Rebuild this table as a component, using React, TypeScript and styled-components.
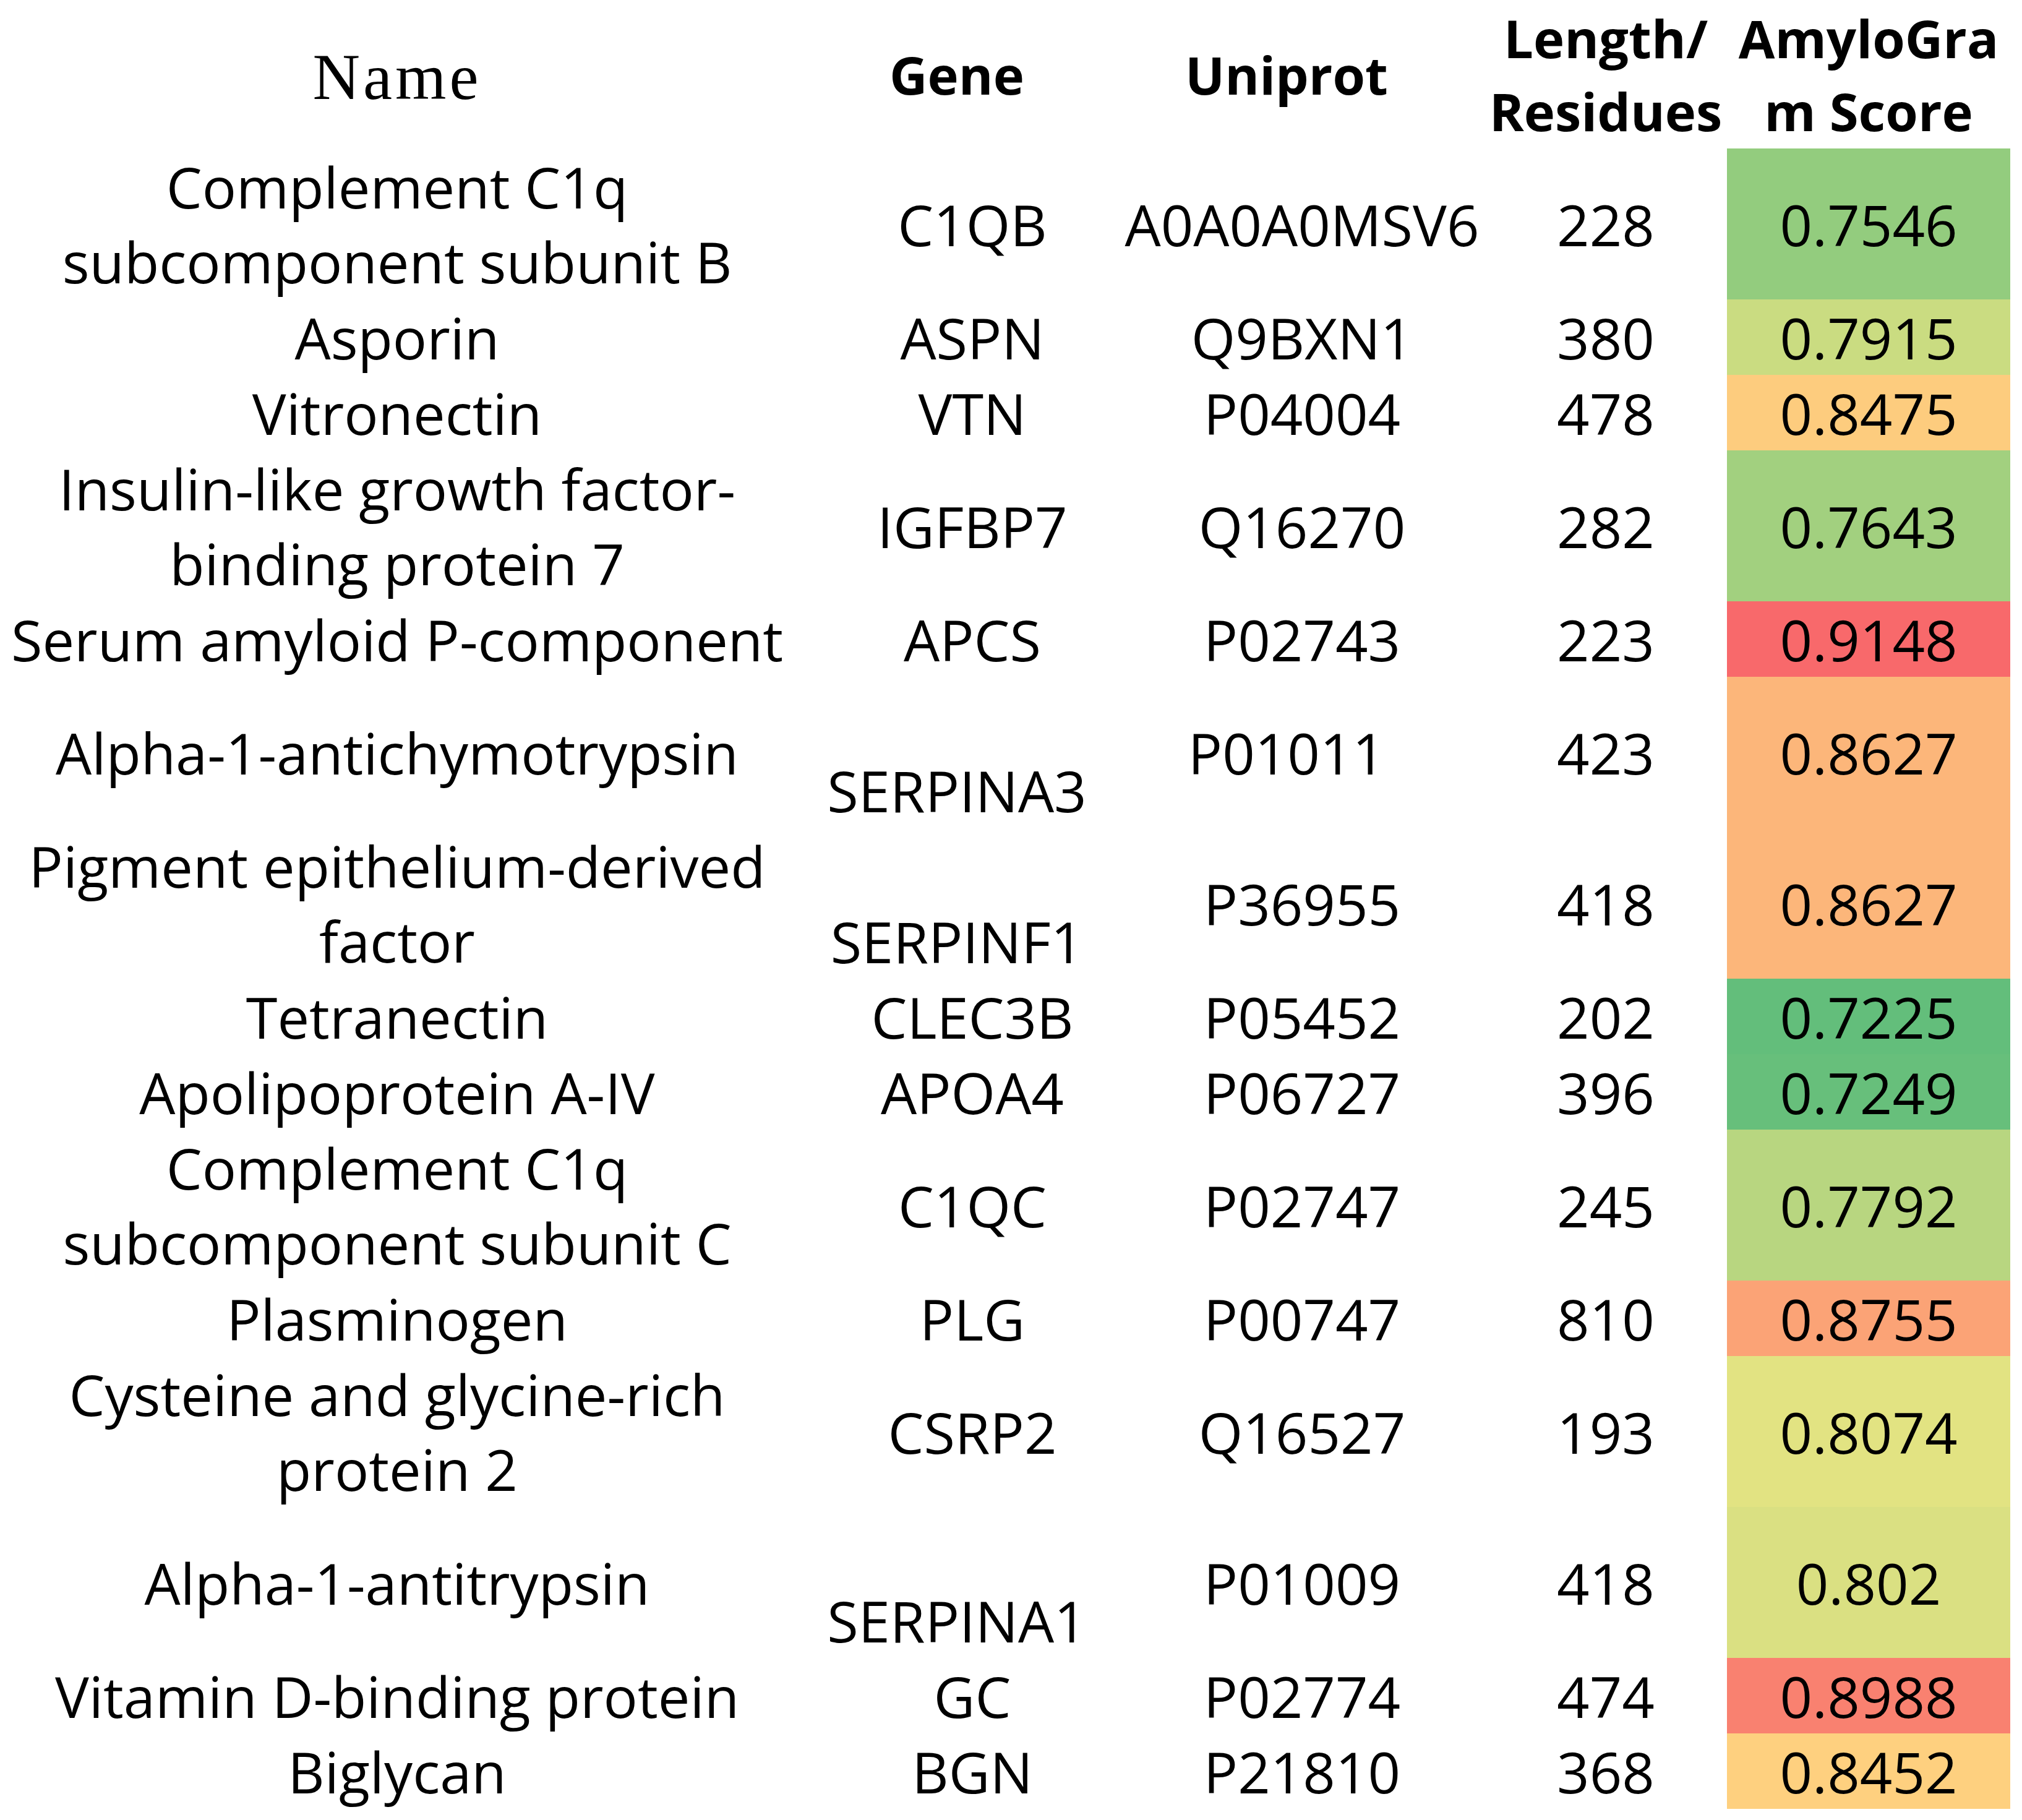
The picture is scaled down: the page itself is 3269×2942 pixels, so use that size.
import React from 'react';
import styled, { createGlobalStyle } from 'styled-components';

const GlobalStyle = createGlobalStyle`
  html, body {
    margin: 0;
    padding: 0;
    background: #fff;
  }
`;

const UNIT = 122;
const COLUMNS = '1284px 526px 590px 392px 458px';

const Sheet = styled.div`
  width: 3250px;
  color: #000;
  font-family: 'Open Sans', 'Noto Sans', sans-serif;
`;

const Row = styled.div<{ $height: number }>`
  display: grid;
  grid-template-columns: ${COLUMNS};
  height: ${(p) => p.$height}px;
`;

const Cell = styled.div<{ $valign?: 'center' | 'bottom'; $nudge?: number }>`
  display: flex;
  flex-direction: column;
  align-items: center;
  justify-content: ${(p) => (p.$valign === 'bottom' ? 'flex-end' : 'center')};
  padding-left: ${(p) => Math.max(0, (p.$nudge || 0) * 2)}px;
  padding-right: ${(p) => Math.max(0, -(p.$nudge || 0) * 2)}px;
  font-size: 92px;
  line-height: 121px;
  white-space: nowrap;
  text-align: center;
`;

const HeadCell = styled(Cell)`
  font-weight: 700;
  font-size: 85px;
  line-height: 118px;
`;

const SerifHead = styled(Cell)`
  font-family: 'Liberation Serif', 'Times New Roman', serif;
  font-size: 106px;
  letter-spacing: 5px;
  padding-top: 8px;
`;

const ScoreCell = styled(Cell)<{ $bg: string }>`
  background: ${(p) => p.$bg};
`;

type Protein = {
  name: string[];
  gene: string;
  uniprot: string;
  length: number;
  score: string;
  span: 1 | 2;
  geneBottom?: boolean;
  uniShift?: boolean;
};

const proteins: Protein[] = [
  { name: ['Complement C1q', 'subcomponent subunit B'], gene: 'C1QB', uniprot: 'A0A0A0MSV6', length: 228, score: '0.7546', span: 2 },
  { name: ['Asporin'], gene: 'ASPN', uniprot: 'Q9BXN1', length: 380, score: '0.7915', span: 1 },
  { name: ['Vitronectin'], gene: 'VTN', uniprot: 'P04004', length: 478, score: '0.8475', span: 1 },
  { name: ['Insulin-like growth factor-', 'binding protein 7'], gene: 'IGFBP7', uniprot: 'Q16270', length: 282, score: '0.7643', span: 2 },
  { name: ['Serum amyloid P-component'], gene: 'APCS', uniprot: 'P02743', length: 223, score: '0.9148', span: 1 },
  { name: ['Alpha-1-antichymotrypsin'], gene: 'SERPINA3', uniprot: 'P01011', length: 423, score: '0.8627', span: 2, geneBottom: true, uniShift: true },
  { name: ['Pigment epithelium-derived', 'factor'], gene: 'SERPINF1', uniprot: 'P36955', length: 418, score: '0.8627', span: 2, geneBottom: true },
  { name: ['Tetranectin'], gene: 'CLEC3B', uniprot: 'P05452', length: 202, score: '0.7225', span: 1 },
  { name: ['Apolipoprotein A-IV'], gene: 'APOA4', uniprot: 'P06727', length: 396, score: '0.7249', span: 1 },
  { name: ['Complement C1q', 'subcomponent subunit C'], gene: 'C1QC', uniprot: 'P02747', length: 245, score: '0.7792', span: 2 },
  { name: ['Plasminogen'], gene: 'PLG', uniprot: 'P00747', length: 810, score: '0.8755', span: 1 },
  { name: ['Cysteine and glycine-rich', 'protein 2'], gene: 'CSRP2', uniprot: 'Q16527', length: 193, score: '0.8074', span: 2 },
  { name: ['Alpha-1-antitrypsin'], gene: 'SERPINA1', uniprot: 'P01009', length: 418, score: '0.802', span: 2, geneBottom: true },
  { name: ['Vitamin D-binding protein'], gene: 'GC', uniprot: 'P02774', length: 474, score: '0.8988', span: 1 },
  { name: ['Biglycan'], gene: 'BGN', uniprot: 'P21810', length: 368, score: '0.8452', span: 1 },
];

// three-colour scale, green -> yellow -> red
const LOW = [99, 190, 123];
const MID = [255, 235, 132];
const HIGH = [248, 105, 107];
const MIN = 0.7225;
const MIDV = 0.8267;
const MAX = 0.9148;

const mix = (a: number[], b: number[], t: number) =>
  `rgb(${a.map((v, i) => Math.round(v + (b[i] - v) * t)).join(',')})`;

const scoreColor = (s: string) => {
  const v = parseFloat(s);
  if (v <= MIDV) return mix(LOW, MID, (v - MIN) / (MIDV - MIN));
  return mix(MID, HIGH, (v - MIDV) / (MAX - MIDV));
};

const Lines = ({ lines }: { lines: string[] }) => (
  <>
    {lines.map((l) => (
      <span key={l}>{l}</span>
    ))}
  </>
);

const App = () => (
  <>
    <GlobalStyle />
    <Sheet>
      <Row $height={240}>
        <SerifHead>Name</SerifHead>
        <HeadCell>Gene</HeadCell>
        <HeadCell $nudge={-25}>Uniprot</HeadCell>
        <HeadCell>
          <Lines lines={['Length/', 'Residues']} />
        </HeadCell>
        <HeadCell>
          <Lines lines={['AmyloGra', 'm Score']} />
        </HeadCell>
      </Row>
      {proteins.map((p) => (
        <Row key={p.gene} $height={p.span * UNIT}>
          <Cell>
            <Lines lines={p.name} />
          </Cell>
          <Cell $valign={p.geneBottom ? 'bottom' : 'center'} $nudge={p.geneBottom ? 0 : 25}>
            {p.gene}
          </Cell>
          <Cell $nudge={p.uniShift ? -25 : 0}>{p.uniprot}</Cell>
          <Cell>{p.length}</Cell>
          <ScoreCell $bg={scoreColor(p.score)}>{p.score}</ScoreCell>
        </Row>
      ))}
    </Sheet>
  </>
);

export default App;
